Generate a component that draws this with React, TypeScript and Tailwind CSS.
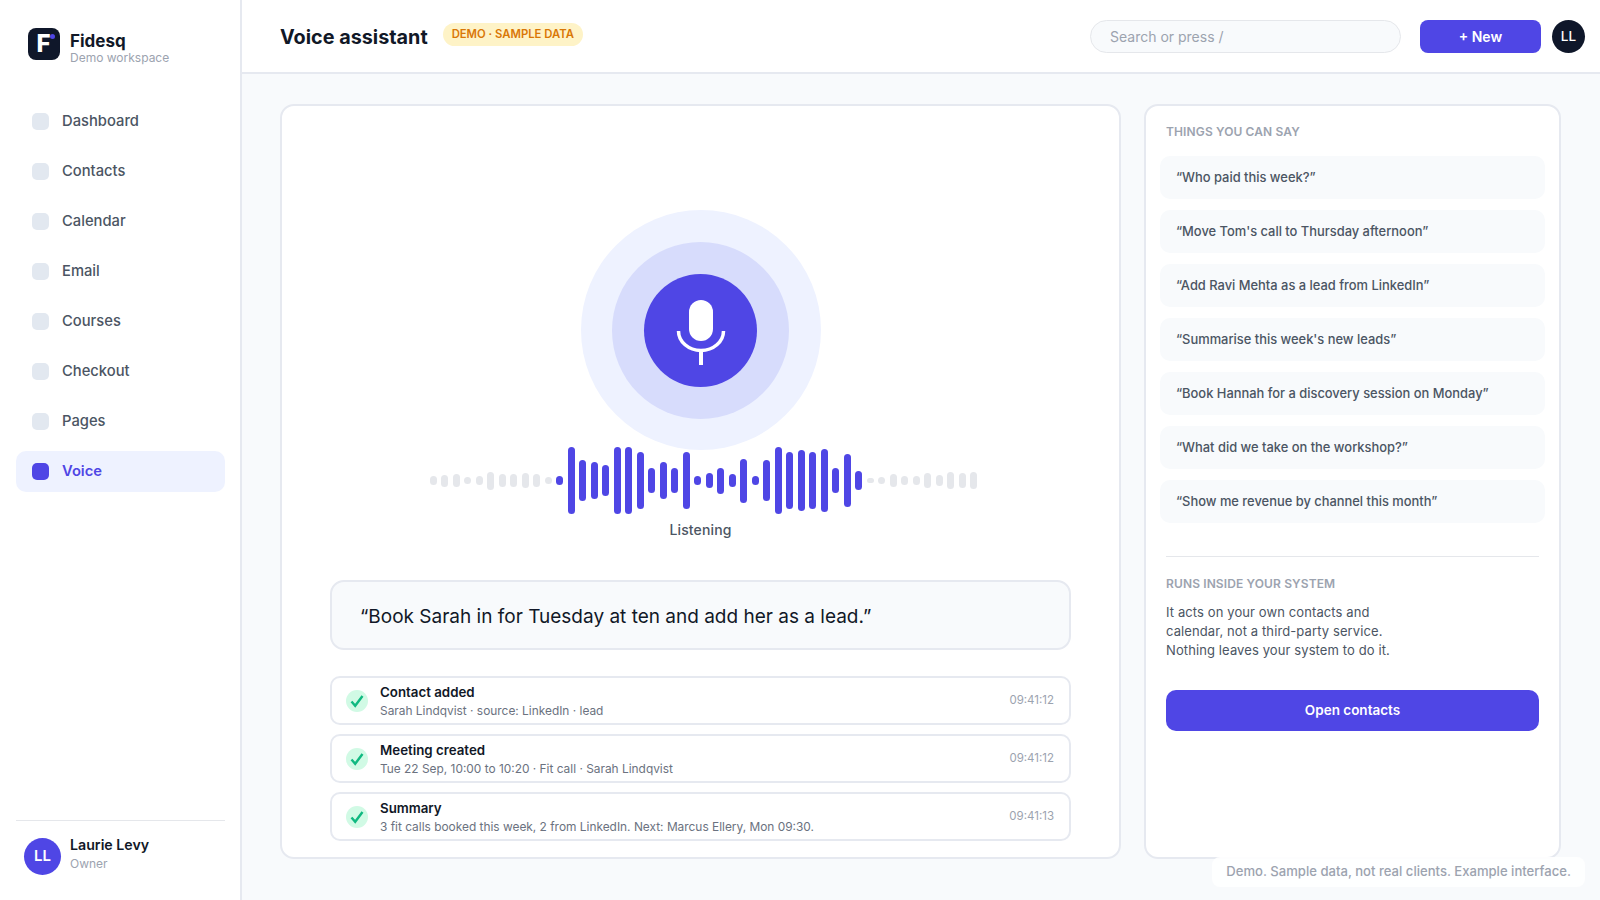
import React from 'react';

const navItems = ['Dashboard', 'Contacts', 'Calendar', 'Email', 'Courses', 'Checkout', 'Pages', 'Voice'];

const phrases = [
  '“Who paid this week?”',
  '“Move Tom\'s call to Thursday afternoon”',
  '“Add Ravi Mehta as a lead from LinkedIn”',
  '“Summarise this week\'s new leads”',
  '“Book Hannah for a discovery session on Monday”',
  '“What did we take on the workshop?”',
  '“Show me revenue by channel this month”',
];

const events = [
  { title: 'Contact added', detail: 'Sarah Lindqvist · source: LinkedIn · lead', time: '09:41:12' },
  { title: 'Meeting created', detail: 'Tue 22 Sep, 10:00 to 10:20 · Fit call · Sarah Lindqvist', time: '09:41:12' },
  { title: 'Summary', detail: '3 fit calls booked this week, 2 from LinkedIn. Next: Marcus Ellery, Mon 09:30.', time: '09:41:13' },
];

// bar heights of the wave form, left to right
const bars = [
  9, 12, 13, 7, 9, 18, 13, 13, 15, 13, 7, 9, 67, 41, 37, 31, 67, 67, 57, 25, 37, 25, 57, 9,
  15, 26, 13, 44, 9, 41, 67, 57, 61, 57, 63, 25, 53, 19, 5, 7, 13, 9, 9, 15, 11, 17, 15, 17,
];

const Sidebar: React.FC = () => (
  <aside className="w-[242px] shrink-0 h-full flex flex-col bg-white border-r-2 border-[#e6e9f0] pl-4 pr-[15px]">
    <div className="h-8 mt-7 flex items-start gap-[10px] pl-3">
      <div className="relative w-8 h-8 rounded-lg bg-[#0f172a] flex items-center justify-center pr-[1px]">
        <span className="text-white text-[24px] leading-none font-extrabold">F</span>
        <span className="absolute top-[6px] right-[5px] w-[5px] h-[5px] rounded-full bg-[#4f46e5]"></span>
      </div>
      <div className="mt-[3px]">
        <div className="text-[17px] leading-[20px] font-bold text-[#111827]">Fidesq</div>
        <div className="text-[12px] leading-[14px] text-[#9ca3af]">Demo workspace</div>
      </div>
    </div>
    <nav className="mt-[41px] flex flex-col gap-[9px]">
      {navItems.map((item) => {
        const active = item === 'Voice';
        return (
          <div
            key={item}
            className={`h-[41px] rounded-[10px] flex items-center gap-[13px] px-4 text-[14.75px] ${active ? 'bg-[#eef2ff] text-[#4f46e5] font-semibold' : 'text-[#4b5563] font-medium'}`}
          >
            <span className={`w-[17px] h-[17px] rounded-[5px] ${active ? 'bg-[#4f46e5]' : 'bg-[#e2e8f0]'}`}></span>
            {item}
          </div>
        );
      })}
    </nav>
    <div className="mt-auto border-t border-[#e5e7eb] h-[80px] flex items-start gap-[9px] pl-2 pt-[17px]">
      <div className="w-[37px] h-[37px] rounded-full bg-[#4f46e5] text-white flex items-center justify-center text-[15px] font-semibold">LL</div>
      <div className="-mt-[2px]">
        <div className="text-[14.2px] leading-[18px] font-semibold text-[#111827]">Laurie Levy</div>
        <div className="text-[12px] leading-[16px] mt-[2px] text-[#9ca3af]">Owner</div>
      </div>
    </div>
  </aside>
);

const Header: React.FC = () => (
  <header className="h-[74px] shrink-0 bg-white border-b-2 border-[#e6e9f0] flex items-start pl-[38px] pr-[15px] pt-5">
    <h1 className="text-[19.8px] leading-[34px] font-bold text-[#111827]">Voice assistant</h1>
    <span className="ml-[15px] mt-[3px] h-[23px] px-[9px] rounded-full bg-[#fef3c7] text-[#d97706] text-[11.3px] font-semibold flex items-center">DEMO · SAMPLE DATA</span>
    <div className="ml-auto w-[311px] h-[33px] rounded-full border border-[#e5e7eb] bg-[#f8fafc] flex items-center pl-[19px] pr-5 text-[14px] text-[#9ca3af]">Search or press /</div>
    <button className="ml-[19px] w-[121px] h-[33px] rounded-lg bg-[#4f46e5] text-white text-[14px] font-semibold">+ New</button>
    <div className="ml-[11px] w-[33px] h-[33px] rounded-full bg-[#0f172a] text-white text-[13.5px] font-medium flex items-center justify-center">LL</div>
  </header>
);

const MicIcon: React.FC = () => (
  <svg width="56" height="70" viewBox="0 0 56 70" fill="none">
    <rect x="16" y="5" width="24" height="41" rx="12" fill="#ffffff" />
    <path d="M5.5 36a22.5 19.5 0 0 0 45 0" stroke="#ffffff" strokeWidth="3.5" />
    <path d="M28 55v15" stroke="#ffffff" strokeWidth="4" />
  </svg>
);

const Listening: React.FC = () => (
  <div className="flex flex-col items-center pt-[104px]">
    <div className="w-[240px] h-[240px] rounded-full bg-[#eef2ff] flex items-center justify-center">
      <div className="w-[177px] h-[177px] rounded-full bg-[#d7dcfc] flex items-center justify-center">
        <div className="w-[113px] h-[113px] rounded-full bg-[#4f46e5] flex items-center justify-center">
          <MicIcon />
        </div>
      </div>
    </div>
    <div className="-mt-[3px] ml-[6px] h-[67px] flex items-center gap-[4.5px] relative">
      {bars.map((h, i) => (
        <span
          key={i}
          className={`w-[7px] rounded-full ${i >= 11 && i <= 37 ? 'bg-[#4f46e5]' : 'bg-[#e5e7eb]'}`}
          style={{ height: h }}
        ></span>
      ))}
    </div>
    <div className="mt-[6px] text-[14px] leading-[20px] font-medium text-[#4b5563] tracking-[0.01em]">Listening</div>
  </div>
);

const EventRow: React.FC<{ title: string; detail: string; time: string }> = ({ title, detail, time }) => (
  <div className="h-[49px] rounded-[10px] border-2 border-[#e6e9f0] flex items-center pl-[14px] pr-[15px]">
    <span className="w-[22px] h-[22px] rounded-full bg-[#d1fae5] flex items-center justify-center shrink-0">
      <svg width="14" height="14" viewBox="0 0 14 14" fill="none">
        <path d="M1.5 7.5l3.7 4.3L12.5 2" stroke="#10b981" strokeWidth="2.4" />
      </svg>
    </span>
    <div className="ml-[12px] min-w-0 self-start pt-[5px]">
      <div className="text-[13.3px] leading-[18px] font-semibold text-[#111827]">{title}</div>
      <div className="mt-[1px] text-[11.9px] leading-[18px] text-[#6b7280]">{detail}</div>
    </div>
    <span className="ml-auto text-[11.5px] text-[#9ca3af]">{time}</span>
  </div>
);

const SidePanel: React.FC = () => (
  <section className="w-[417px] shrink-0 rounded-[14px] border-2 border-[#e6e9f0] bg-white px-5 pt-[18px]">
    <h2 className="text-[12px] leading-[16px] font-semibold text-[#9ca3af] tracking-[0.01em]">THINGS YOU CAN SAY</h2>
    <ul className="mt-[16px] -mx-[6px] flex flex-col gap-[11px]">
      {phrases.map((p) => (
        <li key={p} className="h-[43px] rounded-[10px] bg-[#f8fafc] flex items-center px-4 text-[12.9px] font-medium text-[#4b5563]">{p}</li>
      ))}
    </ul>
    <div className="mt-[33px] border-t border-[#e5e7eb]"></div>
    <h2 className="mt-[19px] text-[12px] leading-[16px] font-semibold text-[#9ca3af] tracking-[0.01em]">RUNS INSIDE YOUR SYSTEM</h2>
    <p className="mt-[11px] max-w-[240px] text-[13px] leading-[19px] text-[#4b5563] tracking-[0.008em]">
      It acts on your own contacts and calendar, not a third-party service. Nothing leaves your system to do it.
    </p>
    <button className="mt-[30px] w-full h-[41px] rounded-[10px] bg-[#4f46e5] text-white text-[13.5px] font-semibold">Open contacts</button>
  </section>
);

const App: React.FC = () => {
  return (
    <div className="h-screen w-full flex bg-[#f8fafc] overflow-hidden relative [font-family:Inter,'Liberation_Sans',sans-serif]">
      <Sidebar />
      <div className="flex-1 min-w-0 flex flex-col">
        <Header />
        <main className="flex-1 min-h-0 flex gap-[23px] pl-[38px] pr-[39px] pt-[30px] pb-[41px]">
          <section className="flex-1 min-w-0 rounded-[14px] border-2 border-[#e6e9f0] bg-white px-[48px] flex flex-col">
            <Listening />
            <div className="mt-[40px] h-[70px] rounded-[14px] border-2 border-[#e6e9f0] bg-[#f8fafc] flex items-center px-7 pt-[4px] text-[19px] text-[#111827]">
              “Book Sarah in for Tuesday at ten and add her as a lead.”
            </div>
            <div className="mt-[26px] flex flex-col gap-[9px]">
              {events.map((e) => (
                <EventRow key={e.title} {...e} />
              ))}
            </div>
          </section>
          <SidePanel />
        </main>
      </div>
      <div className="absolute right-[15px] bottom-[13px] h-[30px] px-[14px] rounded-lg bg-white/90 flex items-center text-[13.1px] font-medium text-[#9ca3af]">
        Demo. Sample data, not real clients. Example interface.
      </div>
    </div>
  );
};

export default App;
